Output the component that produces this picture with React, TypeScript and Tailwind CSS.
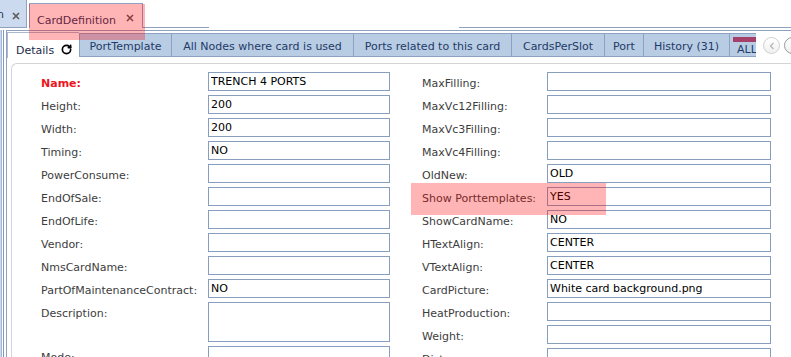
import { RotateCw } from "lucide-react";

type Field = { label: string; value?: string; tall?: boolean; required?: boolean };

const leftFields: Field[] = [
  { label: "Name:", value: "TRENCH 4 PORTS", required: true },
  { label: "Height:", value: "200" },
  { label: "Width:", value: "200" },
  { label: "Timing:", value: "NO" },
  { label: "PowerConsume:" },
  { label: "EndOfSale:" },
  { label: "EndOfLife:" },
  { label: "Vendor:" },
  { label: "NmsCardName:" },
  { label: "PartOfMaintenanceContract:", value: "NO" },
  { label: "Description:", tall: true },
  { label: "Mode:" },
];

const rightFields: Field[] = [
  { label: "MaxFilling:" },
  { label: "MaxVc12Filling:" },
  { label: "MaxVc3Filling:" },
  { label: "MaxVc4Filling:" },
  { label: "OldNew:", value: "OLD" },
  { label: "Show Porttemplates:", value: "YES" },
  { label: "ShowCardName:", value: "NO" },
  { label: "HTextAlign:", value: "CENTER" },
  { label: "VTextAlign:", value: "CENTER" },
  { label: "CardPicture:", value: "White card background.png" },
  { label: "HeatProduction:" },
  { label: "Weight:" },
  { label: "Distance:" },
];

const tabs = [
  { name: "PortTemplate", w: "w-[92px]" },
  { name: "All Nodes where card is used", w: "w-[182px]" },
  { name: "Ports related to this card", w: "w-[158px]" },
  { name: "CardsPerSlot", w: "w-[93px]" },
  { name: "Port", w: "w-[39px]" },
  { name: "History (31)", w: "w-[86px]" },
];

function CloseX() {
  return (
    <svg width="8" height="8" viewBox="0 0 8 8" className="shrink-0">
      <path d="M1 1L7 7M7 1L1 7" stroke="#5a5a5a" strokeWidth="1.6" />
    </svg>
  );
}

function FieldColumn({ fields, labelW, inputW }: { fields: Field[]; labelW: string; inputW: string }) {
  return (
    <div className="flex flex-col gap-[4px]">
      {fields.map((f) => (
        <div key={f.label} className="flex items-start">
          <div
            className={`${labelW} h-[19px] shrink-0 pt-[4px] leading-[15px] whitespace-nowrap ${
              f.required ? "font-bold text-[#ee1520]" : "text-[#3d3d3d]"
            }`}
          >
            {f.label}
          </div>
          {f.tall ? (
            <textarea
              readOnly
              className={`${inputW} block h-[40px] resize-none border border-[#879ebf] bg-white px-[2px] outline-none`}
            />
          ) : (
            <input
              readOnly
              value={f.value ?? ""}
              className={`${inputW} block h-[19px] border border-[#879ebf] bg-white px-[2px] py-0 text-[11px] leading-[17px] text-black outline-none`}
            />
          )}
        </div>
      ))}
    </div>
  );
}

export default function App() {
  return (
    <div className="relative h-[357px] w-[791px] overflow-hidden bg-white font-['DejaVu_Sans',sans-serif] text-[11px]">
      {/* top document tabs */}
      <div className="flex h-[28px]">
        <div className="flex h-[28px] w-[27px] shrink-0 items-center justify-end gap-[8px] overflow-hidden border-r border-b border-[#8ea2c0] bg-[#cbdaee] pr-[6px] pt-[4px] text-[#1c3660]">
          <span className="whitespace-nowrap">Definition</span>
          <CloseX />
        </div>
        <div className="ml-[2px] mt-[3px] flex h-[25px] w-[114px] shrink-0 items-start border-l border-t border-r border-[#8ea2c0] bg-white pl-[7px] text-[#1c3660]">
          <span className="mt-[10px] leading-[13px]">CardDefinition</span>
          <span className="ml-[10px] mt-[10px]">
            <CloseX />
          </span>
        </div>
        <div className="w-[66px] border-b border-[#8ea2c0]" />
        <div className="w-[250px]" />
        <div className="flex-1 border-b border-[#8ea2c0]" />
      </div>

      {/* outer panel */}
      <div className="h-[329px] border-l border-[#c9d8ee]">
        <div className="h-full border-l border-[#a3b7d6] pl-px">
          <div className="h-full border-l border-[#8199bc] pl-[2px]">
            <div className="mt-[2px] h-full border-l border-t border-[#8ea2c0]">
              {/* inner tab strip */}
              <div className="flex h-[27px] items-start">
                <div className="mt-px flex h-[26px] w-[72px] shrink-0 items-center border-l border-t border-[#aab9d0] bg-white pl-[8px] pt-[11px] text-[#1c2c4c]">
                  <span>Details</span>
                  <RotateCw className="mb-[3px] ml-[7px] h-[11px] w-[11px] text-black" strokeWidth={3.6} />
                </div>
                <div className="mt-[2px] flex h-[24px] shrink-0 border-t border-b border-[#8ca2c2] bg-[#b8cce4] text-[#1f3b66]">
                  {tabs.map((t) => (
                    <div key={t.name} className={`${t.w} flex items-center justify-center border-l border-[#8ca2c2] pt-[5px] whitespace-nowrap`}>
                      {t.name}
                    </div>
                  ))}
                  <div className="relative w-[27px] overflow-hidden border-l border-[#8ca2c2] pl-[7px] pt-[9px] leading-[13px] whitespace-nowrap">
                    <div className="absolute left-[3px] top-[3px] h-[5px] w-[24px] bg-[#a4406a]" />
                    ALL
                  </div>
                </div>
                <div className="ml-[7px] mt-[6px] flex gap-[4px]">
                  <div className="flex h-[17px] w-[17px] items-center justify-center rounded-full border border-[#cfcfcf] bg-gradient-to-b from-white to-[#f0f0f0]">
                    <svg width="6" height="8" viewBox="0 0 6 8">
                      <path d="M4.5 1L1.5 4L4.5 7" fill="none" stroke="#b5b5b5" strokeWidth="1.3" />
                    </svg>
                  </div>
                  <div className="h-[17px] w-[17px] rounded-full border border-[#9a9a9a] bg-gradient-to-b from-white to-[#f0f0f0]" />
                </div>
              </div>

              {/* content panel */}
              <div className="ml-[4px] mt-[5px] h-full rounded-tl-[6px] border-l border-t border-[#d4d4d4] pl-[29px] pt-[8px]">
                <div className="flex gap-[32px]">
                  <FieldColumn fields={leftFields} labelW="w-[167px]" inputW="w-[182px]" />
                  <FieldColumn fields={rightFields} labelW="w-[125px]" inputW="w-[224px]" />
                </div>
              </div>
            </div>
          </div>
        </div>
      </div>

      {/* highlight marks */}
      <div className="pointer-events-none absolute left-[29px] top-[4px] h-[36px] w-[116px] bg-[rgba(255,0,0,0.29)]" />
      <div className="pointer-events-none absolute left-[411px] top-[183px] h-[32px] w-[195px] bg-[rgba(255,0,0,0.29)]" />
    </div>
  );
}
